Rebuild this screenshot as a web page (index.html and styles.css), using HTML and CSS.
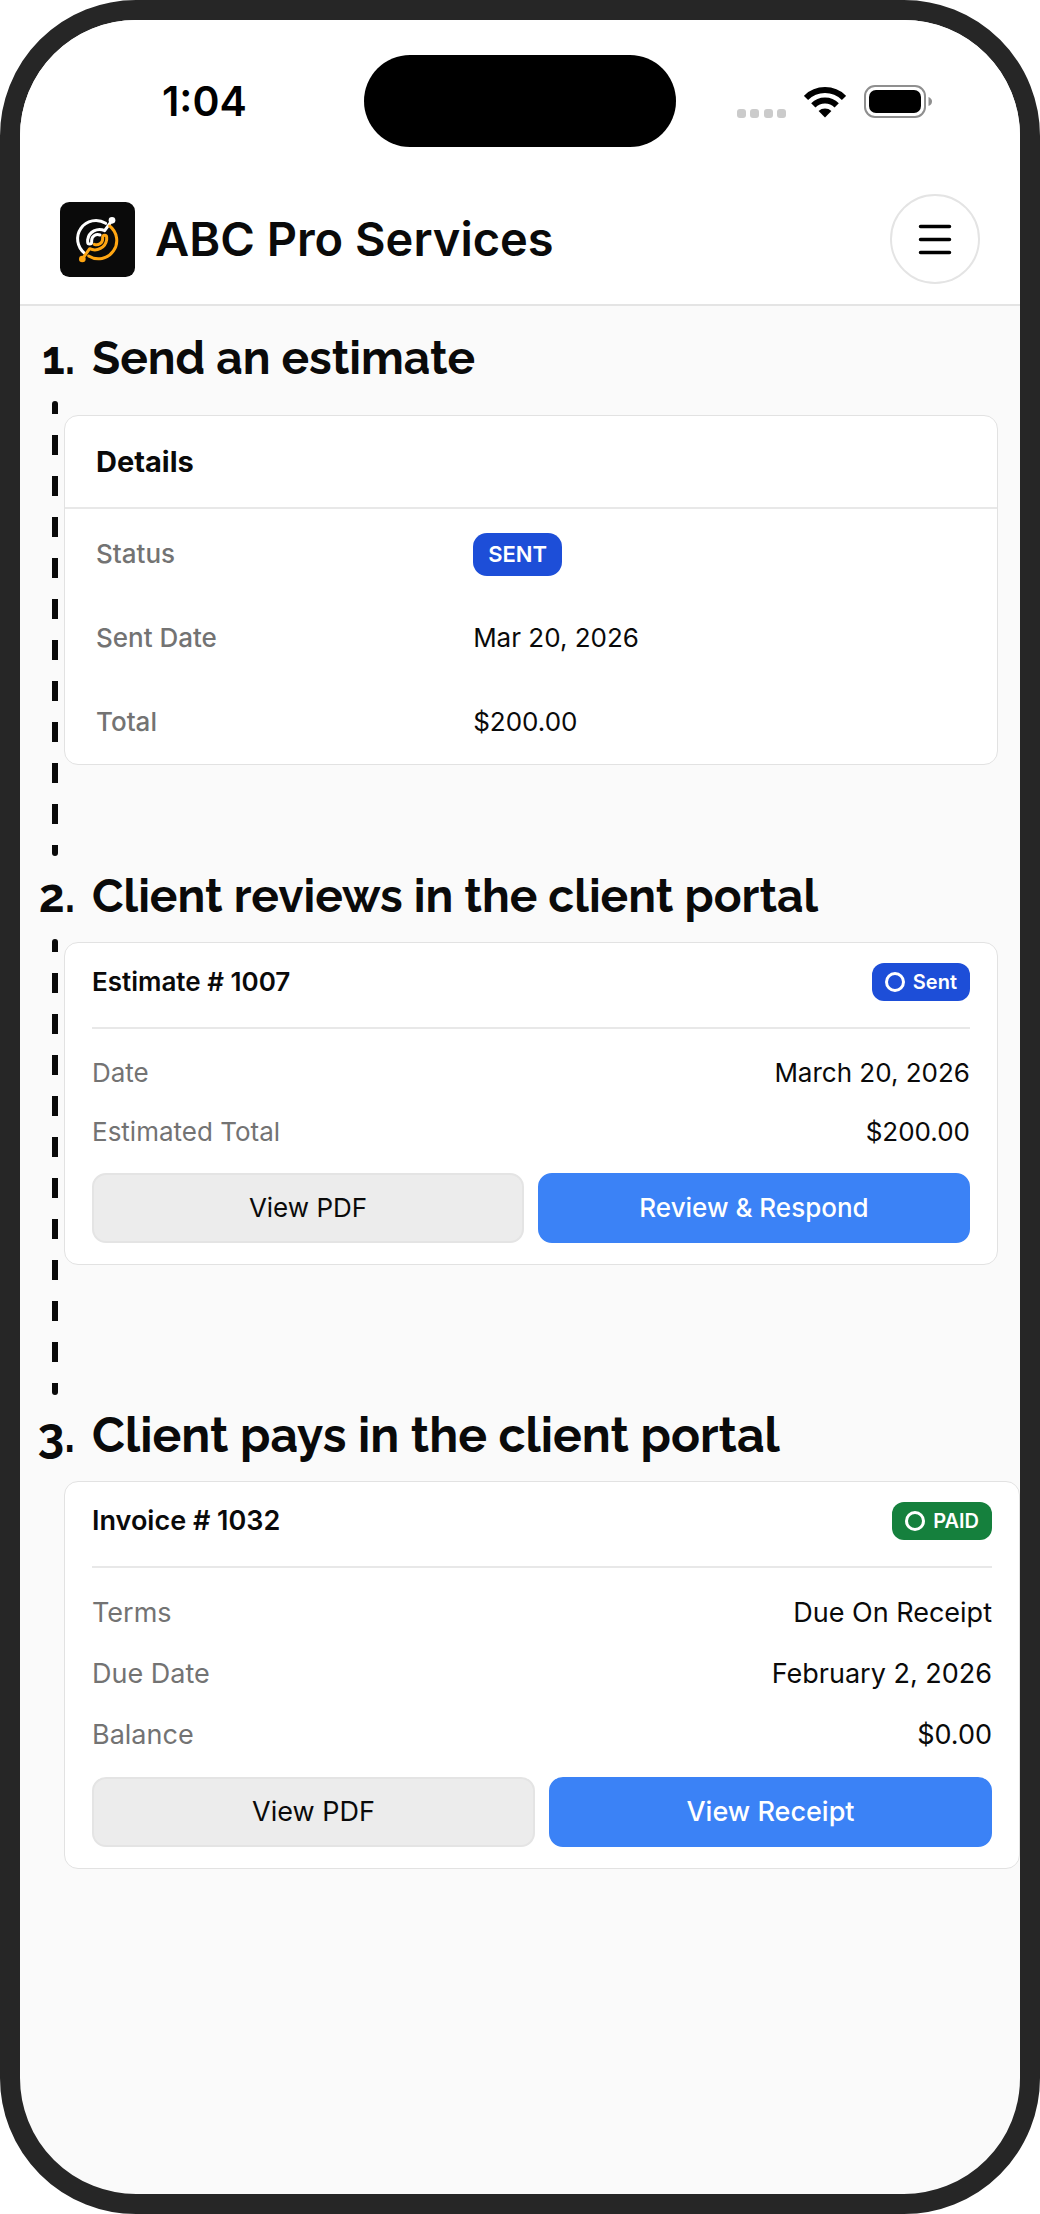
FILE: index.html
```html
<!DOCTYPE html>
<html lang="en">
<head>
  <meta charset="utf-8">
  <meta name="viewport" content="width=device-width, initial-scale=1">
  <title>ABC Pro Services</title>
  <link rel="stylesheet" href="styles.css">
</head>
<body>
  <div class="phone">
    <div class="status-bar">
      <span class="status-time">1:04</span>
      <span class="island"></span>
      <div class="status-icons">
        <svg class="cell-dots" width="49" height="9" viewBox="0 0 49 9" fill="#cbcbcb" aria-hidden="true">
          <rect width="9" height="9" rx="3"/><rect x="13" width="9" height="9" rx="3"/><rect x="27" width="9" height="9" rx="3"/><rect x="40" width="9" height="9" rx="3"/>
        </svg>
        <svg class="wifi" width="42" height="32" viewBox="0 0 42 32" aria-hidden="true">
          <g fill="none" stroke="#000" stroke-width="6">
            <path d="M2 11.9A27 27 0 0 1 40 11.9"/>
            <path d="M9.3 19.3A16.5 16.5 0 0 1 32.7 19.3"/>
          </g>
          <path d="M21 31.500L14.600 25A9.500 9.500 0 0 1 27.400 25Z"/>
        </svg>
        <svg class="battery" width="68" height="33" viewBox="0 0 68 33" aria-hidden="true">
          <rect x="1" y="1" width="60" height="31" rx="10" fill="none" stroke="#8f8f8f" stroke-width="2"/>
          <rect x="5" y="5" width="52" height="23" rx="7"/>
          <path d="M64.500 12Q68 13.500 68 16.500T64.500 21Z" fill="#8f8f8f"/>
        </svg>
      </div>
    </div>

    <header class="app-header">
      <svg class="logo" viewBox="0 0 225 225" aria-hidden="true">
        <rect width="225" height="225" rx="28" fill="#0a0a0a"/>
        <g fill="none" stroke="#fff" stroke-width="9" stroke-linecap="round" stroke-linejoin="round">
          <path d="M74 154A55 55 0 0 1 137 64"/>
          <path d="M156 55L134 86A36 36 0 0 0 83 113V120A6 6 0 0 0 95 120V115A18 18 0 0 1 120 99"/>
        </g>
        <circle cx="156" cy="55" r="10" fill="#fff"/>
        <g transform="rotate(180 111.500 113)">
          <g fill="none" stroke="#ffa612" stroke-width="9" stroke-linecap="round" stroke-linejoin="round">
            <path d="M74 154A55 55 0 0 1 137 64"/>
            <path d="M156 55L134 86A36 36 0 0 0 83 113V120A6 6 0 0 0 95 120V115A18 18 0 0 1 120 99"/>
          </g>
          <circle cx="156" cy="55" r="10" fill="#ffa612"/>
        </g>
      </svg>
      <h1 class="app-title">ABC Pro Services</h1>
      <button class="menu-button" type="button" aria-label="Menu">
        <svg width="34" height="31" viewBox="0 0 34 31" stroke="#000" stroke-width="3.500" stroke-linecap="round" aria-hidden="true">
          <path d="M2.500 2.500h29M2.500 15.500h29M2.500 28.500h29"/>
        </svg>
      </button>
    </header>

    <main class="steps">
      <section class="step">
        <h2 class="step-heading"><span class="step-number">1.</span>Send an estimate</h2>
        <div class="step-body">
          <div class="rail"><span class="rail-line"></span></div>
          <article class="card details">
            <h3 class="details-title">Details</h3>
            <dl class="details-list">
              <div class="details-row"><dt>Status</dt><dd><span class="badge badge-large">SENT</span></dd></div>
              <div class="details-row"><dt>Sent Date</dt><dd>Mar 20, 2026</dd></div>
              <div class="details-row"><dt>Total</dt><dd>$200.00</dd></div>
            </dl>
          </article>
        </div>
      </section>

      <section class="step">
        <h2 class="step-heading"><span class="step-number">2.</span>Client reviews in the client portal</h2>
        <div class="step-body">
          <div class="rail"><span class="rail-line"></span></div>
          <article class="card document">
            <div class="document-header">
              <h3 class="document-title">Estimate # 1007</h3>
              <span class="badge"><span class="ring"></span>Sent</span>
            </div>
            <dl class="document-list">
              <div class="document-row"><dt>Date</dt><dd>March 20, 2026</dd></div>
              <div class="document-row"><dt>Estimated Total</dt><dd>$200.00</dd></div>
            </dl>
            <div class="actions">
              <button class="button" type="button">View PDF</button>
              <button class="button button-primary" type="button">Review &amp; Respond</button>
            </div>
          </article>
        </div>
      </section>

      <section class="step step-last">
        <h2 class="step-heading"><span class="step-number">3.</span>Client pays in the client portal</h2>
        <div class="step-body">
          <div class="rail"></div>
          <article class="card document invoice">
            <div class="document-header">
              <h3 class="document-title">Invoice # 1032</h3>
              <span class="badge badge-paid"><span class="ring"></span>PAID</span>
            </div>
            <dl class="document-list">
              <div class="document-row"><dt>Terms</dt><dd>Due On Receipt</dd></div>
              <div class="document-row"><dt>Due Date</dt><dd>February 2, 2026</dd></div>
              <div class="document-row"><dt>Balance</dt><dd>$0.00</dd></div>
            </dl>
            <div class="actions">
              <button class="button" type="button">View PDF</button>
              <button class="button button-primary" type="button">View Receipt</button>
            </div>
          </article>
        </div>
      </section>
    </main>
  </div>
</body>
</html>
```
FILE: styles.css
```css
* {
  box-sizing: border-box;
}

body,
h1,
h2,
h3,
dl,
dd {
  margin: 0;
}

body {
  background: #fff;
  color: #0a0a0a;
  font-family: Inter, "Liberation Sans", sans-serif;
  font-size: 26px;
  line-height: 32px;
}

.phone {
  min-height: 100vh;
  overflow: hidden;
  border: 20px solid #262626;
  border-radius: 136px;
  background: #fafafa;
}

/* Status bar */
.status-bar {
  display: grid;
  grid-template-columns: 1fr 312px 1fr;
  align-items: center;
  padding: 35px 0 25px;
  background: #fff;
}

.status-time {
  padding-left: 142px;
  color: #000;
  font-size: 41px;
  font-weight: 600;
  line-height: 48px;
}

.island {
  height: 92px;
  border-radius: 46px;
  background: #000;
}

.status-icons {
  display: flex;
  justify-content: flex-end;
  align-items: flex-end;
  padding-right: 88px;
}

.wifi {
  margin: 0 18px;
}

/* App header */
.app-header {
  display: flex;
  align-items: center;
  padding: 22px 40px 20px;
  border-bottom: 2px solid #e4e4e4;
  background: #fff;
}

.logo {
  width: 75px;
  height: 75px;
}

.app-title {
  flex: 1;
  padding-left: 20px;
  font-size: 47px;
  font-weight: 600;
  line-height: 60px;
}

.menu-button {
  display: grid;
  place-items: center;
  width: 90px;
  height: 90px;
  padding: 0;
  border: 2px solid #e4e4e4;
  border-radius: 50%;
  background: #fff;
}

/* Steps */
.steps {
  padding-top: 12px;
}

.step-heading {
  display: flex;
  align-items: center;
  gap: 17px;
  min-height: 83px;
  padding-bottom: 3px;
  font-family: Raleway, Lato, sans-serif;
  font-size: 46px;
  font-weight: 700;
  line-height: 56px;
}

.step-last .step-heading {
  font-size: 48px;
}

.step-number {
  width: 55px;
  text-align: right;
}

.step-body {
  display: flex;
}

.rail {
  display: flex;
  justify-content: flex-end;
  width: 44px;
  padding-right: 6px;
}

.rail-line {
  width: 6px;
  border-radius: 3px;
  background: repeating-linear-gradient(#0a0a0a 0 13px, transparent 13px 34px, #0a0a0a 34px 41px);
}

/* Cards */
.card {
  flex: 1;
  margin: 3px 22px 130px 0;
  border: 1px solid #e2e2e2;
  border-radius: 14px;
  background: #fff;
}

dt {
  color: #737373;
}

.details {
  margin-top: 14px;
  margin-bottom: 91px;
}

.details-title {
  padding: 30px 31px 29px;
  border-bottom: 2px solid #e8e8e8;
  font-size: 29px;
  font-weight: 700;
}

.details-list {
  padding: 3px 31px 0;
}

.details-row {
  display: grid;
  grid-template-columns: 378fr 494fr;
  align-items: center;
  height: 84px;
}

.details-row dt {
  font-weight: 500;
}

.details-row dd {
  display: flex;
}

.document {
  padding: 20px 27px 21px;
}

.document-header {
  display: flex;
  justify-content: space-between;
  align-items: center;
  padding-bottom: 26px;
  border-bottom: 2px solid #e8e8e8;
}

.document-title {
  font-size: 26px;
  font-weight: 600;
}

.document-list {
  padding: 14px 0 12px;
}

.document-row {
  display: flex;
  justify-content: space-between;
  align-items: center;
  height: 59px;
}

.invoice {
  margin-right: 0;
  font-size: 27px;
}

.invoice .document-title {
  font-size: 27px;
}

.invoice .document-row {
  height: 61px;
}

/* Badges */
.badge {
  display: flex;
  align-items: center;
  gap: 8px;
  height: 38px;
  padding: 0 13px;
  border-radius: 12px;
  background: #1d4ed8;
  color: #fff;
  font-size: 20px;
  font-weight: 600;
}

.badge-large {
  height: 43px;
  padding: 0 15px;
  border-radius: 14px;
  font-size: 22px;
}

.badge-paid {
  background: #15803d;
}

.ring {
  width: 20px;
  height: 20px;
  border: 3px solid #fff;
  border-radius: 50%;
}

/* Buttons */
.actions {
  display: grid;
  grid-template-columns: 1fr 1fr;
  gap: 14px;
}

.button {
  height: 70px;
  padding: 0;
  border: 2px solid #e4e4e4;
  border-radius: 14px;
  background: #ececec;
  color: #0a0a0a;
  font: inherit;
}

.button-primary {
  border-color: #3b82f6;
  background: #3b82f6;
  color: #fff;
  font-weight: 500;
}
```
